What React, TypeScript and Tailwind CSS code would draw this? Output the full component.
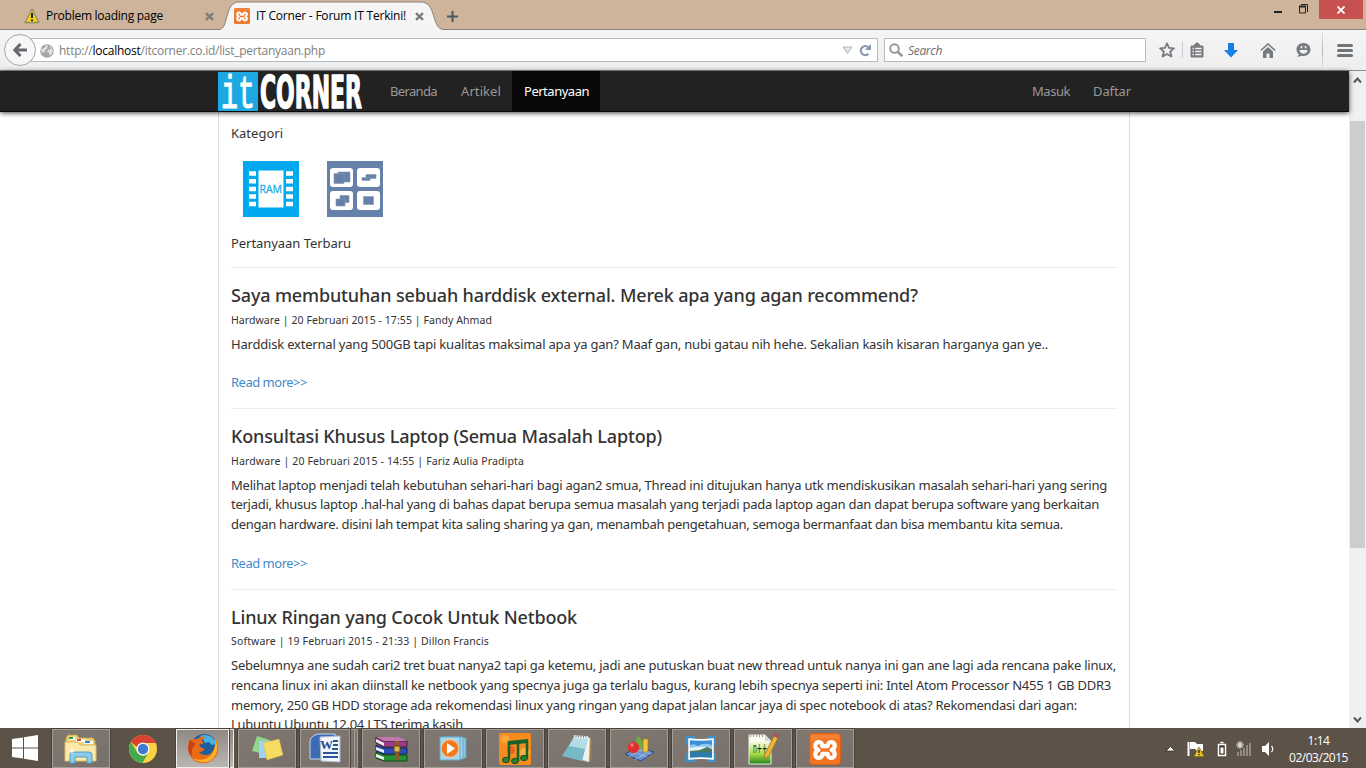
import { useLayoutEffect, useRef } from "react";
import type { ReactNode } from "react";

/* Single text line whose tracking is adjusted so it fills the given width. */
function Line({ w, className = "", children }: { w: number; className?: string; children: ReactNode }) {
  const ref = useRef<HTMLSpanElement>(null);
  useLayoutEffect(() => {
    const el = ref.current;
    if (!el) return;
    const fit = () => {
      el.style.letterSpacing = "0px";
      const n = (el.textContent || "").length || 1;
      el.style.letterSpacing = (w - el.getBoundingClientRect().width) / n + "px";
    };
    fit();
    document.fonts.ready.then(fit);
  }, [w]);
  return (
    <span ref={ref} className={"block w-max whitespace-pre " + className}>
      {children}
    </span>
  );
}

const XMark = () => (
  <svg width="9" height="9" viewBox="0 0 9 9">
    <path d="M1 1.2 8 7.8M8 1.2 1 7.8" stroke="#7d7c7a" strokeWidth="2.4" />
  </svg>
);

const Xampp = ({ size }: { size: number }) => (
  <svg width={size} height={size} viewBox="0 0 32 32">
    <rect x="0.5" y="0.5" width="31" height="31" rx="3" fill="#f37423" stroke="#d85f14" />
    <path d="M2 2h28v4Q16 4 2 8z" fill="#f98f4b" opacity=".5" />
    <path
      d="M13.300 13.200C13.800 7.800 6.300 7.800 6.300 12.600C6.300 15 7.600 16.400 9.400 17C7.600 17.600 6.300 19 6.300 21.400C6.300 26.200 13.800 26.200 13.300 20.800H18.700C18.200 26.200 25.700 26.200 25.700 21.400C25.700 19 24.400 17.600 22.600 17C24.400 16.400 25.700 15 25.700 12.600C25.700 7.800 18.200 7.800 18.700 13.200Z"
      fill="none" stroke="#fff" strokeWidth="4.200" strokeLinejoin="round"
    />
  </svg>
);

const Warning = ({ size }: { size: number }) => (
  <svg width={size} height={size} viewBox="0 0 16 16">
    <path d="M8 1.200 15 14.500H1z" fill="#f2d41c" stroke="#8f8a66" strokeWidth="1.300" strokeLinejoin="round" />
    <path d="M8 5v5" stroke="#222" strokeWidth="2" />
    <circle cx="8" cy="12.300" r="1.100" fill="#222" />
  </svg>
);

function TabBar() {
  return (
    <div className="flex h-[30px] shrink-0 border-b border-[#8b8275] bg-[#cdb49a]">
      <div className="flex w-[219px] items-center pl-6 pt-[3px]">
        <Warning size={16} />
        <Line w={117} className="ml-[6px] font-['Open_Sans','Noto_Sans',sans-serif] text-[12px] text-black">Problem loading page</Line>
        <span className="ml-[42px]"><XMark /></span>
      </div>
      <div className="relative h-[30px] w-[228px]">
        <svg className="absolute left-0 top-0" width="228" height="30" viewBox="0 0 228 30">
          <path d="M0 29.500C10 29.500 5 2 20 2H202C218 2 212 29.500 225 29.500V31H0z" fill="#f5f5f5" />
          <path d="M0 29.500C10 29.500 5 2 20 2H202C218 2 212 29.500 225 29.500" fill="none" stroke="#8b8275" />
        </svg>
        <div className="relative flex h-[30px] items-center pl-[15px] pt-[2px]">
          <Xampp size={16} />
          <Line w={150} className="ml-[6px] font-['Open_Sans','Noto_Sans',sans-serif] text-[12px] text-black">IT Corner - Forum IT Terkini!</Line>
          <span className="ml-[9px]"><XMark /></span>
        </div>
      </div>
      <svg className="mt-[11px]" width="11" height="11" viewBox="0 0 11 11">
        <path d="M5.500 0v11M0 5.500h11" stroke="#4b5760" strokeWidth="2" />
      </svg>
      <div className="ml-auto flex h-[19px] pr-[3px]">
        <svg width="45" height="19" viewBox="0 0 45 19">
          <path d="M0 12h8" stroke="#222" strokeWidth="2" />
          <path d="M25.500 6.500h6v6.500h-6z" fill="none" stroke="#222" />
          <path d="M25 6.500h7" stroke="#222" strokeWidth="2" />
          <path d="M27 4.500h6.500V12" fill="none" stroke="#222" />
        </svg>
        <div className="grid w-[44px] place-items-center bg-[#c75050]">
          <svg width="8" height="8" viewBox="0 0 8 8"><path d="m.5.5 7 7m0-7-7 7" stroke="#fff" strokeWidth="1.800" /></svg>
        </div>
      </div>
    </div>
  );
}

function Toolbar() {
  return (
    <div className="flex h-[41px] shrink-0 items-center border-b border-[#8f8f8f] bg-gradient-to-b from-[#f5f5f5] to-[#eeeeee] pl-1">
      <div className="z-10 grid size-8 shrink-0 place-items-center rounded-full border border-[#a5a5a5] bg-[#f7f7f7]">
        <svg width="14" height="14" viewBox="0 0 14 14">
          <path d="M7.500 1 1.800 7l5.700 6M2.500 7H14" fill="none" stroke="#666a6e" strokeWidth="3" />
        </svg>
      </div>
      <div className="-ml-[5px] flex h-6 w-[847px] items-center border border-[#b4bdc6] bg-white pl-2 pt-px">
        <svg width="14" height="14" viewBox="0 0 14 14">
          <circle cx="7" cy="7" r="6.800" fill="#a6a6a6" />
          <path d="M1 5c2 0 4-1 5-4l2 1-1 3-2 1v2L2 9zM8 6l4-2 1 4-3 4-1-3-2-1zM10 2l2 1-2 1z" fill="#dedede" />
        </svg>
        <Line w={266} className="ml-[5px] mt-px font-['Open_Sans','Noto_Sans',sans-serif] text-[12px] text-[#808080]">
          http://<span className="text-black">localhost</span>/itcorner.co.id/list_pertanyaan.php
        </Line>
        <svg className="ml-auto" width="11" height="9" viewBox="0 0 11 9"><path d="M1 1h9L5.500 7.500z" fill="#e0e4ec" stroke="#aeb5c2" /></svg>
        <svg className="ml-[6px] mr-[5px]" width="13" height="13" viewBox="0 0 13 13">
          <path d="M9.500 9.800A4.500 4.500 0 1 1 9.500 3.300" fill="none" stroke="#8b98aa" strokeWidth="2.200" />
          <path d="M12 0v6H6z" fill="#8b98aa" />
        </svg>
      </div>
      <div className="ml-[6px] flex h-6 w-[262px] items-center border border-[#b4bdc6] bg-white pl-1">
        <svg width="14" height="14" viewBox="0 0 14 14">
          <circle cx="5.500" cy="5.500" r="4.300" fill="none" stroke="#969696" strokeWidth="1.900" />
          <path d="m8.500 8.500 4.800 4.800" stroke="#969696" strokeWidth="2.500" />
        </svg>
        <Line w={34} className="ml-[5px] mt-[2px] font-['Open_Sans','Noto_Sans',sans-serif] text-[12px] italic text-[#6c6c6c]">Search</Line>
      </div>
      <svg className="ml-[13px]" width="16" height="16" viewBox="0 0 16 16">
        <path d="m8 1.300 2 4.500 4.900.5-3.700 3.200 1.200 5L8 12l-4.400 2.500 1.200-5L1.100 6.300 6 5.800z" fill="none" stroke="#777b80" strokeWidth="1.800" strokeLinejoin="round" />
      </svg>
      <div className="ml-[7px] h-4 w-px bg-[#c5cdd6]" />
      <svg className="ml-[7px]" width="14" height="16" viewBox="0 0 14 16">
        <path d="M1 4h3l1-2h1V1h2v1h1l1 2h3v11H1z" fill="#777b80" stroke="#777b80" strokeLinejoin="round" />
        <path d="M2.500 6.500h1.500m1.200 0h6.300M2.500 9.500H4m1.200 0h6.300M2.500 12.500H4m1.200 0h6.300" stroke="#f1f1f1" strokeWidth="1.500" />
      </svg>
      <svg className="ml-[20px]" width="14" height="15" viewBox="0 0 14 15"><path d="M4 0h6v7h4l-7 7.500L0 7h4z" fill="#177fe5" /></svg>
      <svg className="ml-[22px]" width="16" height="15" viewBox="0 0 16 15">
        <path d="M.8 7.500 8 1l7.200 6.500" fill="none" stroke="#777b80" strokeWidth="1.600" />
        <path d="M3 8.500 8 4l5 4.500V15h-3.500v-4.500h-3V15H3z" fill="#777b80" />
      </svg>
      <svg className="ml-[20px]" width="15" height="15" viewBox="0 0 15 15">
        <path d="M7.500 0C12 0 14.500 3 14.500 6.500S12 13 7.500 13c-1 0-1.500 0-2.300-.3-1.200.9-2.700 1.300-4 1.100 1-.8 1.500-1.500 1.600-2.500C1.300 10 .5 8.500.5 6.500.5 3 3 0 7.500 0z" fill="#777b80" />
        <path d="M4.700 3h1.600v2.200H4.700zM8.800 3h1.600v2.200H8.800zM3.500 7h8c-.3 5-7.700 5-8 0z" fill="#f1f1f1" />
      </svg>
      <div className="ml-[11px] h-9 w-px bg-gradient-to-b from-[#e5e5e5] via-[#afb8c2] to-[#e5e5e5]" />
      <div className="ml-[14px] flex w-4 flex-col gap-[2px]">
        <i className="h-[3px] rounded bg-[#70757a]" /><i className="h-[3px] rounded bg-[#70757a]" /><i className="h-[3px] rounded bg-[#70757a]" />
      </div>
    </div>
  );
}

function Nav() {
  return (
    <nav className="relative flex h-[41px] shrink-0 border-b border-[#080808] bg-[#222] pl-[218px] text-[13px] leading-[40px] text-[#999] shadow-[0_1px_5px_rgba(0,0,0,0.75)]">
      <svg className="mt-px overflow-visible" width="146" height="39" viewBox="0 0 146 39">
        <rect width="40" height="39" fill="#1ea8e1" />
        <text x="3" y="36" fill="#fff" stroke="#fff" strokeWidth="1" fontFamily="Liberation Mono, monospace" fontSize="46" textLength="34" lengthAdjust="spacingAndGlyphs">it</text>
        <text x="42" y="36" fill="#fff" stroke="#fff" strokeWidth="1.500" strokeLinejoin="round" fontFamily="DejaVu Sans Condensed, DejaVu Sans, sans-serif" fontWeight="700" fontSize="45" textLength="102" lengthAdjust="spacingAndGlyphs">CORNER</text>
      </svg>
      <Line w={47} className="ml-[26px]">Beranda</Line>
      <Line w={40} className="ml-6">Artikel</Line>
      <div className="ml-[11px] h-[40px] w-[88px] bg-[#080808] pl-3 text-white"><Line w={65}>Pertanyaan</Line></div>
      <Line w={38} className="ml-auto">Masuk</Line>
      <Line w={38} className="ml-[23px] mr-[218px]">Daftar</Line>
    </nav>
  );
}

const RamIcon = () => (
  <svg width="56" height="56" viewBox="0 0 56 56">
    <rect width="56" height="56" fill="#00a8ef" />
    <rect x="15.500" y="9.500" width="25" height="37" fill="#fff" />
    <path d="M6 12.500h7M6 20.300h7M6 28h7M6 35.500h7M6 43h7M43 12.500h7M43 20.300h7M43 28h7M43 35.500h7M43 43h7" stroke="#fff" strokeWidth="4.500" />
    <text x="16.500" y="32" fill="#20aeea" stroke="#20aeea" strokeWidth=".3" fontFamily="Open Sans, sans-serif" fontSize="11.500" textLength="22.500" lengthAdjust="spacingAndGlyphs">RAM</text>
  </svg>
);

const WindowsIcon = () => (
  <svg width="56" height="56" viewBox="0 0 56 56">
    <rect width="56" height="56" fill="#6681a9" />
    <g fill="#fff">
      <rect x="3" y="7" width="23" height="19" rx="3" /><rect x="30" y="7" width="23" height="19" rx="3" />
      <rect x="3" y="30" width="23" height="19" rx="3" /><rect x="30" y="30" width="23" height="19" rx="3" />
    </g>
    <g fill="#6681a9" stroke="#8599b7" strokeWidth=".6">
      <path d="M11 11h12v10H11z" /><path d="M7 12.500h10v10H7z" /><path d="M39 13.500h10v4H39z" /><path d="M35 16.500h8v3h-8z" />
      <path d="M13 34.500h9v7h-9z" /><path d="M9 38h9v7H9z" /><path d="M36.500 35.500h10v8h-10z" />
    </g>
  </svg>
);

const questions = [
  {
    title: "Saya membutuhan sebuah harddisk external. Merek apa yang agan recommend?", tw: 687,
    meta: "Hardware | 20 Februari 2015 - 17:55 | Fandy Ahmad", mw: 261,
    body: [["Harddisk external yang 500GB tapi kualitas maksimal apa ya gan? Maaf gan, nubi gatau nih hehe. Sekalian kasih kisaran harganya gan ye..", 817]],
  },
  {
    title: "Konsultasi Khusus Laptop (Semua Masalah Laptop)", tw: 431,
    meta: "Hardware | 20 Februari 2015 - 14:55 | Fariz Aulia Pradipta", mw: 293,
    body: [
      ["Melihat laptop menjadi telah kebutuhan sehari-hari bagi agan2 smua, Thread ini ditujukan hanya utk mendiskusikan masalah sehari-hari yang sering", 876],
      ["terjadi, khusus laptop .hal-hal yang di bahas dapat berupa semua masalah yang terjadi pada laptop agan dan dapat berupa software yang berkaitan", 868],
      ["dengan hardware. disini lah tempat kita saling sharing ya gan, menambah pengetahuan, semoga bermanfaat dan bisa membantu kita semua.", 832],
    ],
  },
  {
    title: "Linux Ringan yang Cocok Untuk Netbook", tw: 346,
    meta: "Software | 19 Februari 2015 - 21:33 | Dillon Francis", mw: 258,
    body: [
      ["Sebelumnya ane sudah cari2 tret buat nanya2 tapi ga ketemu, jadi ane putuskan buat new thread untuk nanya ini gan ane lagi ada rencana pake linux,", 885],
      ["rencana linux ini akan diinstall ke netbook yang specnya juga ga terlalu bagus, kurang lebih specnya seperti ini: Intel Atom Processor N455 1 GB DDR3", 880],
      ["memory, 250 GB HDD storage ada rekomendasi linux yang ringan yang dapat jalan lancar jaya di spec notebook di atas? Rekomendasi dari agan:", 846],
      ["Lubuntu Ubuntu 12.04 LTS terima kasih", 232],
    ],
  },
] as { title: string; tw: number; meta: string; mw: number; body: [string, number][] }[];

function Content() {
  return (
    <main className="ml-[218px] h-[616px] w-[912px] overflow-hidden border-x border-[#ddd] px-3 text-[13px] leading-5 text-[#333]">
      <Line w={52} className="pt-[11px]">Kategori</Line>
      <div className="flex gap-7 pl-3 pt-[18px]"><RamIcon /><WindowsIcon /></div>
      <Line w={120} className="mt-4">Pertanyaan Terbaru</Line>
      <div className="mt-[14px]">
        {questions.map((q) => (
          <article key={q.title} className="border-t border-[#eee] pb-4 pt-[15px]">
            <h2 className="text-[18px] font-medium leading-6"><Line w={q.tw}>{q.title}</Line></h2>
            <div className="mt-[4.500px] text-[10.5px] leading-4"><Line w={q.mw}>{q.meta}</Line></div>
            <div className="mt-[7px] leading-[19.7px]">
              {q.body.map(([t, w]) => <Line key={t} w={w}>{t}</Line>)}
            </div>
            <a className="mt-[18px] block text-[#428bca]"><Line w={76}>Read more&gt;&gt;</Line></a>
          </article>
        ))}
      </div>
    </main>
  );
}

function Scrollbar() {
  return (
    <div className="flex w-[17px] flex-col items-center bg-[#f0f0f0]">
      <svg className="mt-[5px]" width="9" height="9" viewBox="0 0 9 9"><path d="m1 6.500 3.500-4L8 6.500" fill="none" stroke="#555" strokeWidth="2" /></svg>
      <div className="mt-[36px] h-[427px] w-[15px] bg-[#cdcdcd]" />
      <svg className="mb-[4px] mt-auto" width="9" height="9" viewBox="0 0 9 9"><path d="m1 2.500 3.500 4L8 2.500" fill="none" stroke="#555" strokeWidth="2" /></svg>
    </div>
  );
}

function TaskButton({ children, stack, active }: { children: ReactNode; stack?: "one" | "two"; active?: boolean }) {
  const look = active ? "border-[#f1efec] bg-gradient-to-b from-[#8f8984] to-[#bab6b2]" : "border-[#a39d97] bg-gradient-to-br from-[#817870] to-[#77706b]";
  return (
    <div className="flex h-[39px] w-[58px] shrink-0">
      <div className={"grid flex-1 place-items-center border outline outline-1 outline-[#4a423a] " + look}>{children}</div>
      {stack && <div className={"ml-px w-[4px] border border-l-0 " + look} />}
      {stack === "two" && <div className={"w-[3px] border border-l-0 " + look} />}
    </div>
  );
}

const Explorer = () => (
  <svg width="34" height="32" viewBox="0 0 34 32">
    <path d="M2 5 4 2h9l2 3h14l2 3v19H2z" fill="#eed27a" stroke="#c6a24b" />
    <path d="M5 4h6v3H5z" fill="#fff" /><path d="M5 4h4v2H5z" fill="#21a63c" />
    <path d="M12 6h9v3h-9z" fill="#fff" /><path d="M13 6h4v2h-4z" fill="#da4326" />
    <path d="M20 8h9v3h-9z" fill="#fff" /><path d="M21 8h5v2h-5z" fill="#2589d7" />
    <path d="M1 9h13l2 3h16v16H1z" fill="#fae9a8" stroke="#dcbd66" />
    <path d="M6 30V22q0-3 3-3h16q3 0 3 3v8h-5v-6H11v6z" fill="#8fcbe7" stroke="#4c9fc4" />
    <path d="M8 15v6M5 18h6" stroke="#fff" />
  </svg>
);

const Chrome = () => (
  <svg width="28" height="28" viewBox="0 0 28 28">
    <circle cx="14" cy="14" r="14" fill="#fbd243" />
    <path d="M1.900 7A14 14 0 0 1 26.600 8H14a6.500 6.500 0 0 0-6 4z" fill="#db4034" />
    <path d="M1.900 7A14 14 0 0 0 13.500 28l6-10.500a6.500 6.500 0 0 1-11.200 0z" fill="#45ab4c" />
    <circle cx="14" cy="14" r="6.500" fill="#fff" /><circle cx="14" cy="14" r="5.200" fill="#3f7bd1" />
  </svg>
);

const Firefox = () => (
  <svg width="32" height="32" viewBox="0 0 32 32">
    <circle cx="17" cy="14" r="13" fill="#1e5d9e" />
    <path d="M13 3c7-3 15 1 16 8l-4 1-3-3-4 1-2-4z" fill="#4cb2df" />
    <path d="M3 6c-3 5-3 13 1 18 5 7 14 8 20 4 7-4 9-12 6-20l-2-3c1 8-1 13-5 16-4 2-9 1-11-2 3 0 4-1 6-3-3-1-5-2-6-4l5-2-2-2c0-2 1-3 3-4-3-1-6 0-8 2H6z" fill="#e86c16" />
    <path d="M28 5c4 8 3 17-4 22-6 4-14 2-18-2 6 3 13 2 17-2 5-5 6-11 5-18z" fill="#fbb32b" />
    <path d="M3 7C0 13 1 20 5 24c-1-7 1-11 4-13L6 9z" fill="#c64217" />
  </svg>
);

const Sticky = () => (
  <svg width="32" height="28" viewBox="0 0 32 28">
    <path d="m6 1 13 4-5 14L1 16z" fill="#91d48b" /><path d="M8 6h13v17H8z" fill="#9fd2f6" />
    <path d="m12 8 16-4 4 16-16 5z" fill="#f7dc62" stroke="#d7b94a" strokeWidth=".5" />
  </svg>
);

const Word = () => (
  <svg width="32" height="31" viewBox="0 0 32 31">
    <path d="M9 1h17v25H1V9Q1 3 9 1z" fill="#3d6bb3" stroke="#c5d7ef" />
    <path d="m11 4 20-1v26l-19-1z" fill="#f3f6fb" stroke="#b0bccf" />
    <text x="11" y="16" fontFamily="Liberation Serif, serif" fontWeight="700" fontSize="13" fill="#234c92">W</text>
    <path d="M24 8h5M24 12h5M23 16h6M14 20h15M14 24h15" stroke="#2b5499" strokeWidth="2" />
  </svg>
);

const Rar = () => (
  <svg width="33" height="26" viewBox="0 0 33 26">
    <path d="m1 1 8 4h23v6H9L1 7z" fill="#9c3c85" stroke="#3f1f37" /><path d="m1 9 8 3h23v6H9l-8-3z" fill="#284fbc" stroke="#152454" />
    <path d="m1 16 8 3h23v6H9l-8-3z" fill="#259235" stroke="#114717" />
    <path d="m1 3 8 4v3L1 6zM1 11l8 3v3l-8-3zM1 18l8 3v3l-8-3z" fill="#eee" />
    <path d="M20 2h4v22h-4z" fill="#8e5a28" /><path d="M19 10h6v6h-6z" fill="#ddb751" stroke="#69421b" />
    <path d="M1 1h23l8 4H9z" fill="#c078ac" />
  </svg>
);

const Media = () => (
  <svg width="28" height="25" viewBox="0 0 28 25">
    <path d="M8 2h19v20H8z" fill="#91c8df" stroke="#5ca0bf" /><path d="M4 1h20v22H4z" fill="#a2d4e8" stroke="#66a9c8" /><path d="M1 1h20v23H1z" fill="#a9d8ea" stroke="#67a9c6" />
    <circle cx="11" cy="12.500" r="8.800" fill="#f17920" stroke="#f8c795" /><path d="m8 7 8 5.500L8 18z" fill="#fff" />
  </svg>
);

const Music = () => (
  <svg width="32" height="32" viewBox="0 0 32 32">
    <rect width="32" height="32" rx="2" fill="#f68c1e" />
    <circle cx="6" cy="6" r="4" fill="#faa63a" /><circle cx="26" cy="20" r="5" fill="#f9ad43" /><circle cx="12" cy="17" r="4" fill="#e7641a" />
    <path d="M9 8 29 6v4L9 12z" fill="#19602b" /><path d="M10 8v18M19 10v18M28 7v18" stroke="#19602b" strokeWidth="2.500" />
    <g fill="#2e7c2d" stroke="#17511e"><ellipse cx="7" cy="27" rx="3.500" ry="2.700" /><ellipse cx="16" cy="28" rx="3.500" ry="2.700" /><ellipse cx="25" cy="25" rx="3.500" ry="2.700" /></g>
  </svg>
);

const Notepad = () => (
  <svg width="31" height="30" viewBox="0 0 31 30">
    <path d="m26 4 4 .5V26l-3 3z" fill="#9c7a42" />
    <path d="m24 3 4 1-1 24-7-2z" fill="#eef3f4" stroke="#b9c6c9" strokeWidth=".6" />
    <path d="m12 3 14 1-6 23-20-5z" fill="#76b9c7" />
    <path d="m12 3 14 1-3 11L7 12z" fill="#b4dde3" />
    <path d="m12 2.500 15 1.200" stroke="#e6eeee" strokeWidth="3" strokeDasharray="1.500 1" />
  </svg>
);

const Shapes = () => (
  <svg width="31" height="28" viewBox="0 0 31 28">
    <path d="m1 19 13-7 16 5-13 9z" fill="#6892ce" stroke="#244c91" /><path d="m7 16 16 6M11 14l16 5M5 22l14-9M11 25l14-9" stroke="#b0c8e9" strokeWidth=".7" />
    <path d="M14 1c6 5 7 12 1 14-5-2-4-9-1-14z" fill="#69af42" /><path d="M19 4h5v13h-5z" fill="#f3c63a" stroke="#a97b16" strokeWidth=".8" />
    <circle cx="9.500" cy="12.500" r="5.700" fill="#df302c" /><circle cx="8" cy="10" r="1.700" fill="#f18075" />
  </svg>
);

const Photo = () => (
  <svg width="30" height="26" viewBox="0 0 30 26">
    <path d="M1 9V1h8M21 1h8v8M29 17v8h-8M9 25H1v-8" fill="#3f91cc" stroke="#3f91cc" strokeWidth="2" />
    <path d="M3 3q12 1.500 24 0v20q-12-1.500-24 0z" fill="#8dc8f0" stroke="#fff" strokeWidth="1.500" />
    <path d="M4 4.500q11 1 22 0V9q-9-3-14 1-4-3-8-1z" fill="#3d8ed6" />
    <path d="M4 12q10-3 22 0v3H4z" fill="#e4f2fa" /><path d="m4 15 10-1 7-3 5 2v3H4z" fill="#4a7b62" /><path d="M4 16h22v5.500q-11-1-22 0z" fill="#2f7ba8" />
  </svg>
);

const NotepadPlus = () => (
  <svg width="32" height="32" viewBox="0 0 32 32">
    <defs><linearGradient id="npp" x1="0" y1="0" x2="0" y2="1"><stop offset=".2" stopColor="#fafdf0" /><stop offset=".65" stopColor="#a9dc45" /><stop offset="1" stopColor="#22851e" /></linearGradient></defs>
    <path d="M2 2h16l6 6v23H2z" fill="url(#npp)" stroke="#e9eee1" />
    <path d="M3 3h15" stroke="#999" strokeWidth="2" strokeDasharray="1 2" /><path d="m18 2 6 6h-6z" fill="#d5dad0" />
    <text x="6" y="19.500" fontFamily="DejaVu Sans, sans-serif" fontSize="14" textLength="14" lengthAdjust="spacingAndGlyphs" fill="#16240e">n++</text>
    <path d="m17 26 1-5L27 3l4 2-9 18z" fill="#eeb43c" stroke="#a66c17" strokeWidth=".8" /><path d="m27 3 1-3 4 2-1 3z" fill="#b84c59" />
  </svg>
);

function Taskbar() {
  return (
    <footer className="flex h-10 shrink-0 gap-1 bg-[#5d5248] pt-px font-['Open_Sans','Noto_Sans',sans-serif] text-[12px] text-white">
      <div className="w-12 pl-[12px] pt-[6px]">
        <svg width="26" height="26" viewBox="0 0 26 26"><path d="m0 4 11-1.500V12.500H0zM12 2.300 26 0v12.500H12zM0 13.500h11v10L0 22zM12 13.500h14V26l-14-2.300z" fill="#fff" /></svg>
      </div>
      <TaskButton><Explorer /></TaskButton>
      <div className="grid w-[58px] place-items-center"><Chrome /></div>
      <TaskButton stack="one" active><Firefox /></TaskButton>
      <TaskButton><Sticky /></TaskButton>
      <TaskButton stack="two"><Word /></TaskButton>
      <TaskButton><Rar /></TaskButton>
      <TaskButton><Media /></TaskButton>
      <TaskButton><Music /></TaskButton>
      <TaskButton><Notepad /></TaskButton>
      <TaskButton><Shapes /></TaskButton>
      <TaskButton><Photo /></TaskButton>
      <TaskButton><NotepadPlus /></TaskButton>
      <TaskButton><Xampp size={32} /></TaskButton>
      <svg className="ml-auto mt-[10px]" width="110" height="20" viewBox="0 0 110 20">
        <path d="m0 12 4.500-4.500L9 12z" fill="#fff" stroke="#342d27" strokeWidth=".8" />
        <path d="M22.500 3v14" stroke="#fff" strokeWidth="2" /><path d="M24 3h5l2 2h6v7h-6l-2-2h-5z" fill="#fff" />
        <path d="m33 8 5 9.500H28z" fill="#f2c71c" stroke="#87731b" strokeWidth=".8" /><path d="M33 11v3m0 1v1.200" stroke="#222" strokeWidth="1.500" />
        <path d="M52.500 5.500h7v11h-7zM54.500 3.500h3" fill="#40382f" stroke="#fff" strokeWidth="1.500" /><path d="M54.500 8.500h3v6h-3z" fill="#fff" />
        <path d="M72 13v4m3-6v6m3-8v8m3-11v11m3-13v13" stroke="#948c84" strokeWidth="2" /><path d="M74 2v8M70 6h8m-6.700-2.700 5.400 5.400m0-5.400-5.400 5.400" stroke="#ddd" strokeWidth="1.200" />
        <path d="M96 7h3l4-4v14l-4-4h-3z" fill="#fff" /><path d="M105.500 7q2.500 3 0 6" fill="none" stroke="#fff" strokeWidth="1.200" />
      </svg>
      <div className="ml-[7px] mr-[16px] flex w-[63px] flex-col items-center leading-[17px]">
        <Line w={22} className="pt-[3px]">1:14</Line><Line w={59}>02/03/2015</Line>
      </div>
    </footer>
  );
}

export default function App() {
  return (
    <div className="flex h-[768px] w-[1366px] flex-col overflow-hidden bg-white font-['Noto_Sans','Open_Sans',sans-serif]">
      <TabBar />
      <Toolbar />
      <div className="flex h-[657px] shrink-0">
        <div className="w-[1349px]"><Nav /><Content /></div>
        <Scrollbar />
      </div>
      <Taskbar />
    </div>
  );
}
